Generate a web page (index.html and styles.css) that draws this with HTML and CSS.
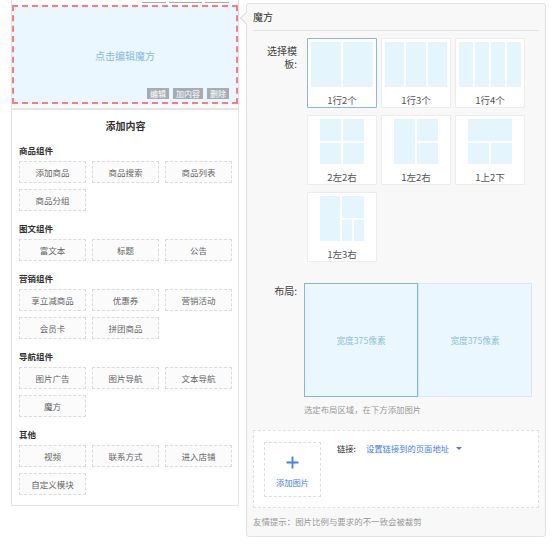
FILE: index.html
```html
<!DOCTYPE html>
<html lang="zh-CN">
<head>
<meta charset="utf-8">
<title>魔方</title>
<link rel="stylesheet" href="styles.css">
</head>
<body>
<div class="page">
  <div class="left">
    <div class="preview">
      <div class="stub"><span class="ln w24"></span><span class="ln w33"></span><span class="ln w24"></span></div>
      <div class="cube">
        <span class="cube-text">点击编辑魔方</span>
        <div class="cube-tools"><span class="tool">编辑</span><span class="tool">加内容</span><span class="tool">删除</span></div>
      </div>
      <div class="strip"></div>
    </div>
    <div class="add-panel">
      <div class="add-title">添加内容</div>
      <div class="sec-title">商品组件</div>
      <div class="btns"><span class="btn">添加商品</span><span class="btn">商品搜索</span><span class="btn">商品列表</span><span class="btn">商品分组</span></div>
      <div class="sec-title">图文组件</div>
      <div class="btns"><span class="btn">富文本</span><span class="btn">标题</span><span class="btn">公告</span></div>
      <div class="sec-title">营销组件</div>
      <div class="btns"><span class="btn">享立减商品</span><span class="btn">优惠券</span><span class="btn">营销活动</span><span class="btn">会员卡</span><span class="btn">拼团商品</span></div>
      <div class="sec-title">导航组件</div>
      <div class="btns"><span class="btn">图片广告</span><span class="btn">图片导航</span><span class="btn">文本导航</span><span class="btn">魔方</span></div>
      <div class="sec-title">其他</div>
      <div class="btns"><span class="btn">视频</span><span class="btn">联系方式</span><span class="btn">进入店铺</span><span class="btn">自定义模块</span></div>
    </div>
  </div>

  <div class="right">
    <div class="r-title">魔方</div>
    <div class="row tpl-row">
      <div class="label tpl-label">选择模板:</div>
      <div class="tpl-grid">
        <div class="card selected">
          <div class="pv pv-wide cols2"><i></i><i></i></div>
          <div class="card-label">1行2个</div>
        </div>
        <div class="card">
          <div class="pv pv-wide cols3"><i></i><i></i><i></i></div>
          <div class="card-label">1行3个</div>
        </div>
        <div class="card">
          <div class="pv pv-wide cols4"><i></i><i></i><i></i><i></i></div>
          <div class="card-label">1行4个</div>
        </div>
        <div class="card">
          <div class="pv pv-sq g22"><i></i><i></i><i></i><i></i></div>
          <div class="card-label">2左2右</div>
        </div>
        <div class="card">
          <div class="pv pv-sq g12"><i class="tall"></i><i></i><i></i></div>
          <div class="card-label">1左2右</div>
        </div>
        <div class="card">
          <div class="pv pv-sq g1t2"><i class="wide"></i><i></i><i></i></div>
          <div class="card-label">1上2下</div>
        </div>
        <div class="card">
          <div class="pv pv-sq g13"><i class="tall"></i><i class="wide"></i><i></i><i></i></div>
          <div class="card-label">1左3右</div>
        </div>
      </div>
    </div>
    <div class="row layout-row">
      <div class="label layout-label">布局:</div>
      <div class="layout">
        <div class="cell active">宽度375像素</div>
        <div class="cell">宽度375像素</div>
      </div>
    </div>
    <div class="hint">选定布局区域，在下方添加图片</div>
    <div class="img-box">
      <div class="add-img">
        <svg class="plus" width="13" height="13" viewBox="0 0 13 13"><path d="M6.5 0.5v12M0.5 6.5h12" stroke="#3f82f0" stroke-width="1.8" fill="none"/></svg>
        <span class="add-img-text">添加图片</span>
      </div>
      <div class="link-row">
        <span class="link-label">链接:</span>
        <span class="link-val">设置链接到的页面地址</span>
        <span class="caret"></span>
      </div>
    </div>
    <div class="tip">友情提示：图片比例与要求的不一致会被裁剪</div>
  </div>
</div>
</body>
</html>
```

FILE: styles.css
```css
* { box-sizing: border-box; }
html, body { margin: 0; padding: 0; background: #fff; }
body {
  font-family: "Noto Sans CJK SC", "Noto Sans", sans-serif;
  color: #333;
  width: 558px;
  height: 549px;
  overflow: hidden;
}
.page {
  display: flex;
  align-items: flex-start;
  padding-left: 11px;
  gap: 7px;
}

/* left column */
.left { width: 228px; display: flex; flex-direction: column; }
.preview {
  border-left: 1px solid #e2e2e2;
  border-right: 1px solid #e2e2e2;
  background: #fafafa;
}
.stub { height: 5px; display: flex; gap: 3px; padding-left: 130px; background: #fff; }
.ln { display: block; height: 1px; margin-top: 2px; background: #a9a9a9; }
.w24 { width: 24px; }
.w33 { width: 33px; }
.cube {
  position: relative;
  height: 99px;
  border: 2px dashed #ff7b7b;
  background: #eaf7fe;
  display: flex;
  align-items: center;
  justify-content: center;
}
.cube-text { font-size: 10px; color: #86bcdf; line-height: 12px; margin-top: 2px; }
.cube-tools { position: absolute; right: 7px; bottom: 3px; display: flex; gap: 4px; }
.tool {
  display: block;
  height: 11px;
  line-height: 11px;
  padding: 0 3px;
  background: #a5acb3;
  color: #fff;
  font-size: 8px;
}
.strip { height: 6px; border-bottom: 2px solid #e4e4e4; }

.add-panel {
  border: 1px solid #e6e6e6;
  border-top: none;
  background: #fff;
  padding: 0 6px 4px 7px;
}
.add-title {
  height: 29px;
  line-height: 32px;
  text-align: center;
  font-size: 10px;
  font-weight: bold;
  color: #333;
}
.sec-title {
  height: 22px;
  line-height: 22px;
  font-size: 8.5px;
  font-weight: bold;
  color: #333;
}
.btns {
  display: grid;
  grid-template-columns: repeat(3, 67px);
  column-gap: 6px;
  row-gap: 6px;
  margin-bottom: 6px;
}
.btn {
  display: block;
  height: 22px;
  line-height: 20px;
  border: 1px dashed #dcdcdc;
  background: #fbfbfb;
  text-align: center;
  font-size: 8.5px;
  color: #666;
}

/* right panel */
.right {
  position: relative;
  width: 300px;
  height: 534px;
  margin-top: 3px;
  background: #f8f8f8;
  border: 1px solid #e3e3e3;
  border-radius: 3px;
  padding: 0 6px 0 6px;
}
.right::before {
  content: "";
  position: absolute;
  left: -5px;
  top: 9px;
  width: 9px;
  height: 9px;
  background: #f8f8f8;
  border-left: 1px solid #dcdcdc;
  border-bottom: 1px solid #dcdcdc;
  transform: rotate(45deg);
}
.r-title {
  height: 27px;
  line-height: 26px;
  font-size: 10px;
  color: #333;
  border-bottom: 1px solid #e3e3e3;
}
.row { display: flex; align-items: flex-start; }
.label {
  width: 44px;
  text-align: right;
  font-size: 10px;
  line-height: 13px;
  color: #444;
}
.tpl-row { margin-top: 7px; }
.tpl-label { padding-left: 10px; padding-top: 6px; margin-right: 10px; }
.tpl-grid {
  display: grid;
  grid-template-columns: repeat(3, 70px);
  column-gap: 4px;
  row-gap: 7px;
}
.card {
  width: 70px;
  height: 70px;
  background: #fff;
  border: 1px solid #ececec;
  border-radius: 1px;
  padding-top: 3px;
}
.card.selected { border-color: #8db4f2; }
.pv { margin: 0 auto; height: 45px; display: grid; gap: 2px; }
.pv i { display: block; background: #e5f5fe; }
.pv-wide { width: 62px; }
.pv-sq { width: 44px; }
.cols2 { grid-template-columns: 1fr 1fr; }
.cols3 { grid-template-columns: 1fr 1fr 1fr; }
.cols4 { grid-template-columns: 1fr 1fr 1fr 1fr; }
.g22 { grid-template-columns: 1fr 1fr; grid-template-rows: 1fr 1fr; }
.g12 { grid-template-columns: 1fr 1fr; grid-template-rows: 1fr 1fr; }
.g12 .tall { grid-row: 1 / 3; }
.g1t2 { grid-template-columns: 1fr 1fr; grid-template-rows: 1fr 1fr; }
.g1t2 .wide { grid-column: 1 / 3; }
.g13 { grid-template-columns: 2fr 1fr 1fr; grid-template-rows: 1fr 1fr; }
.g13 .tall { grid-row: 1 / 3; }
.g13 .wide { grid-column: 2 / 4; }
.card-label {
  margin-top: 7px;
  text-align: center;
  font-size: 9.5px;
  line-height: 12px;
  color: #555;
}

.layout-row { margin-top: 21px; }
.layout-label { padding-top: 1px; margin-right: 7px; }
.layout { display: flex; width: 228px; height: 114px; }
.cell {
  width: 114px;
  height: 114px;
  background: #eaf7fe;
  border: 1px solid #d2e8f9;
  display: flex;
  align-items: center;
  justify-content: center;
  font-size: 8.7px;
  color: #8fc2e0;
}
.cell.active { border-color: #86b2f1; }

.hint {
  margin-top: 6px;
  padding-left: 51px;
  font-size: 8.4px;
  line-height: 12px;
  color: #999;
}
.img-box {
  margin-top: 15px;
  height: 78px;
  background: #fff;
  border: 1px dashed #e2e2e2;
  padding: 11px 10px;
  display: flex;
  align-items: flex-start;
}
.add-img {
  width: 57px;
  height: 55px;
  border: 1px dashed #dedede;
  display: flex;
  flex-direction: column;
  align-items: center;
  padding-top: 13px;
}
.plus { display: block; }
.add-img-text {
  margin-top: 7px;
  font-size: 8.3px;
  line-height: 12px;
  color: #3f82f0;
}
.link-row {
  margin-left: 16px;
  display: flex;
  align-items: center;
  height: 12px;
  margin-top: 0;
  font-size: 8.3px;
  line-height: 12px;
}
.link-label { color: #333; width: 29px; }
.link-val { color: #3f82f0; }
.caret {
  margin-left: 7px;
  width: 0;
  height: 0;
  border-left: 3px solid transparent;
  border-right: 3px solid transparent;
  border-top: 3px solid #3f82f0;
}
.tip {
  margin-top: 7px;
  font-size: 8.45px;
  line-height: 12px;
  color: #999;
}
```
